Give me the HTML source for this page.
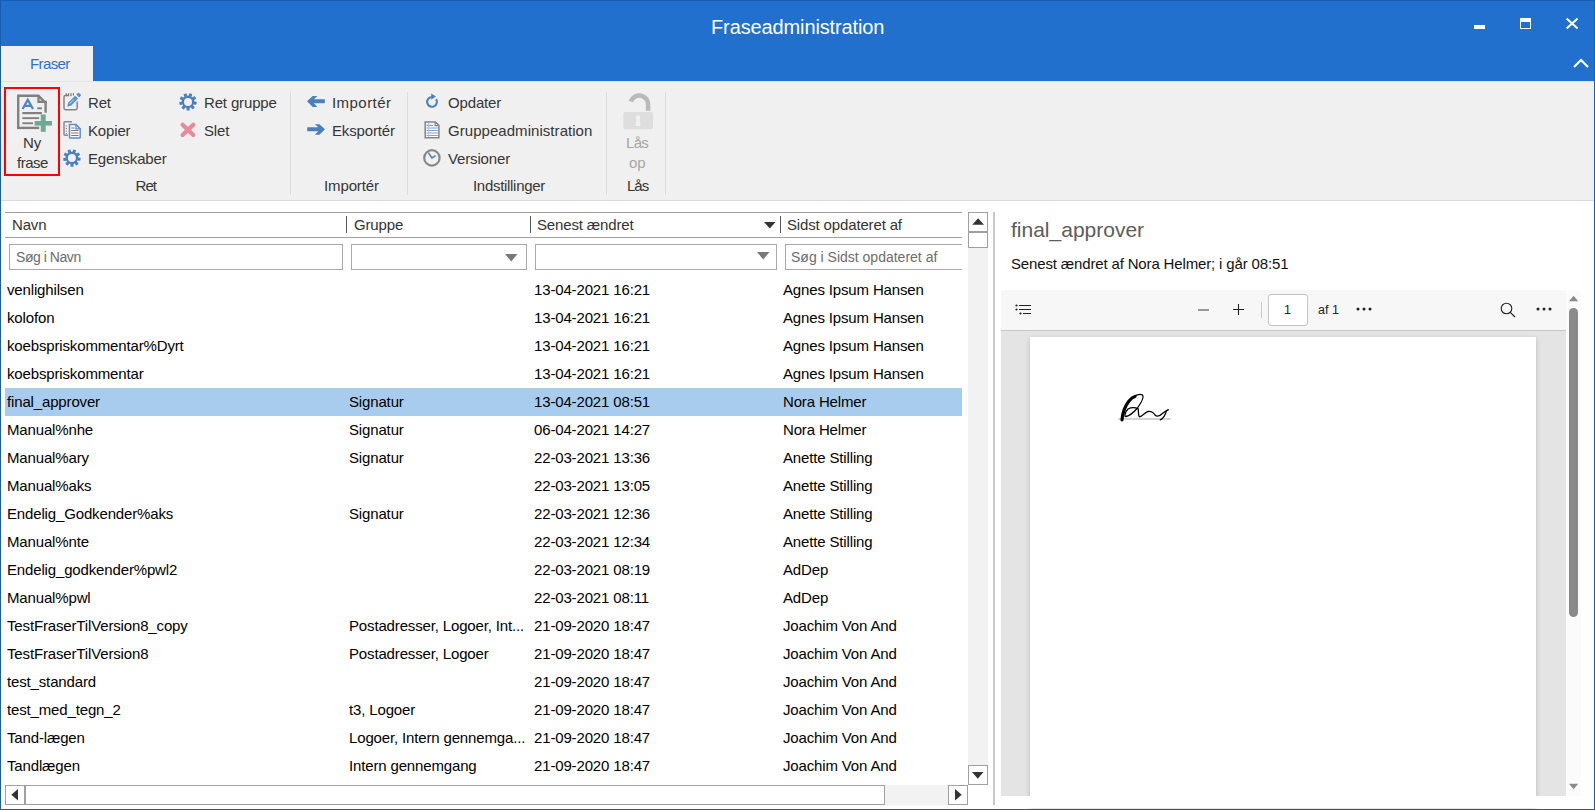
<!DOCTYPE html>
<html><head><meta charset="utf-8">
<style>
*{margin:0;padding:0;box-sizing:border-box}
html,body{width:1595px;height:810px;overflow:hidden;background:#fff;font-family:"Liberation Sans",sans-serif;font-size:15px;color:#000}
.a{position:absolute}
.t{position:absolute;white-space:nowrap;line-height:20px;letter-spacing:-0.15px}
#title{left:0;top:0;width:1595px;height:81px;background:#2170cd}
#frame{left:0;top:0;width:1595px;height:810px;border:1px solid #1a5cb0;pointer-events:none}
#ribbon{left:1px;top:81px;width:1593px;height:120px;background:#f0f0f0;border-bottom:1px solid #d9d9d9;border-top:1px solid #e2e2e2}
.rt{color:#363636}
.sep{position:absolute;width:1px;background:#dcdcdc}
.row{position:absolute;left:5px;width:957px;height:28px}
.row .t{line-height:28px;top:0}
.sel{background:#a8ccee}
</style></head><body>
<div class="a" id="title"></div>
<div class="t" style="left:711px;top:16px;font-size:20px;color:#fff;line-height:22px;letter-spacing:-0.12px">Fraseadministration</div>
<!-- window controls -->
<div class="a" style="left:1474px;top:25px;width:11px;height:4px;background:#fff"></div>
<div class="a" style="left:1520px;top:18px;width:11px;height:11px;border:1px solid #fff;border-top-width:4px"></div>
<svg class="a" style="left:1564px;top:16px" width="16" height="15" viewBox="0 0 16 15"><path d="M2.6 2.4 L13.6 12.6 M13.6 2.4 L2.6 12.6" stroke="#fff" stroke-width="2"/></svg>
<svg class="a" style="left:1572px;top:57px" width="18" height="12" viewBox="0 0 18 12"><path d="M2 10 L9 3 L16 10" stroke="#fff" stroke-width="2.2" fill="none"/></svg>
<!-- tab -->
<div class="a" style="left:1px;top:46px;width:92px;height:35px;background:#f0f0f0"></div>
<div class="t" style="left:30px;top:54px;color:#2d6fcf;letter-spacing:-0.6px">Fraser</div>

<div class="a" id="ribbon"></div>
<!-- Ny frase -->
<div class="a" style="left:4px;top:87px;width:56px;height:89px;border:2px solid #f00"></div>
<svg class="a" style="left:12px;top:90px" width="44" height="44" viewBox="0 0 44 44">
 <path d="M6.2 5.8 H26.5 L33.6 12.9 V22.8" fill="none" stroke="#808080" stroke-width="2.4"/>
 <path d="M6.2 4.6 V38.2" stroke="#808080" stroke-width="2.4"/>
 <path d="M5 37.9 H27.2" stroke="#808080" stroke-width="2.4"/>
 <path d="M26.5 5 V11.8 H34.8" fill="none" stroke="#808080" stroke-width="2.2"/>
 <path d="M10.6 19 L15.8 9.8 L21 19 M12.4 15.8 H19.2" fill="none" stroke="#4a86c8" stroke-width="2.3"/>
 <rect x="25.3" y="17.3" width="4.6" height="2" fill="#808080"/>
 <rect x="10.3" y="22" width="19.6" height="2.2" fill="#808080"/>
 <rect x="10.3" y="27.2" width="16.9" height="1.9" fill="#808080"/>
 <rect x="10.3" y="32.3" width="10.7" height="1.9" fill="#808080"/>
 <rect x="22.6" y="31" width="17.4" height="4.6" fill="#6fa894"/>
 <rect x="28.8" y="24.5" width="4.9" height="17.3" fill="#6fa894"/>
</svg>
<div class="t rt" style="left:23px;top:132.5px;">Ny</div>
<div class="t rt" style="left:17px;top:153px;letter-spacing:-0.5px">frase</div>

<!-- Ret icon -->
<svg class="a" style="left:60px;top:90px" width="24" height="24" viewBox="60 90 24 24">
 <path d="M68 95.4 H65.6 Q64 95.4 64 97 V108 Q64 109.7 65.6 109.7 H75.6 Q77.2 109.7 77.2 108 V101.5" fill="none" stroke="#858585" stroke-width="1.5"/>
 <path d="M66.2 93.2 V96.3 M68.6 93.2 V96.3 M71 93.2 V96.3 M73.4 93.2 V95.5" stroke="#6a6a6a" stroke-width="1.1"/>
 <path d="M67.2 106.8 L68.3 102.6 L75.2 95.7 L78.1 98.6 L71.2 105.5 Z" fill="#5a8fd0"/>
 <path d="M76.3 94.6 L77.9 93 Q78.5 92.4 79.1 93 L80.7 94.6 Q81.3 95.2 80.7 95.8 L79.1 97.4 Z" fill="#5a8fd0"/>
 <path d="M69.6 103.8 L73.8 99.6" stroke="#dfe9f5" stroke-width="0.9"/>
</svg>
<div class="t rt" style="left:88px;top:93px;">Ret</div>
<!-- Kopier icon -->
<svg class="a" style="left:60px;top:118px" width="24" height="24" viewBox="60 118 24 24">
 <path d="M72 121.8 H65 Q64 121.8 64 122.8 V134.3 Q64 135.3 65 135.3 H68" fill="none" stroke="#8a8a8a" stroke-width="1.5"/>
 <path d="M66.3 125.5 v0.9 M66.3 128 v0.9 M66.3 130.5 v0.9 M66.3 133 v0.9" stroke="#777" stroke-width="1.1"/>
 <path d="M69.5 124.6 H76 L80.2 128.8 V137.2 Q80.2 138 79.4 138 H70.3 Q69.5 138 69.5 137.2 Z" fill="#fafafa" stroke="#5a8fd0" stroke-width="1.5"/>
 <path d="M76 124.6 V128.8 H80.2" fill="none" stroke="#5a8fd0" stroke-width="1.3"/>
 <path d="M71.2 128 H74.5 M71.2 130.5 H78.5 M71.2 133 H78.5 M71.2 135.5 H78.5" stroke="#7a7a7a" stroke-width="1.1"/>
</svg>
<div class="t rt" style="left:88px;top:121px;">Kopier</div>
<!-- Egenskaber gear -->
<svg class="a" style="left:60px;top:147px" width="22" height="22" viewBox="60 147 22 22"><g fill="#4a80c0"><circle cx="71.9" cy="158.0" r="6.2"/><rect x="70.45" y="158.0" width="3.1" height="8.7" rx="0.5" transform="rotate(0 71.9 158.0)"/><rect x="70.45" y="158.0" width="3.1" height="8.7" rx="0.5" transform="rotate(40 71.9 158.0)"/><rect x="70.45" y="158.0" width="3.1" height="8.7" rx="0.5" transform="rotate(80 71.9 158.0)"/><rect x="70.45" y="158.0" width="3.1" height="8.7" rx="0.5" transform="rotate(120 71.9 158.0)"/><rect x="70.45" y="158.0" width="3.1" height="8.7" rx="0.5" transform="rotate(160 71.9 158.0)"/><rect x="70.45" y="158.0" width="3.1" height="8.7" rx="0.5" transform="rotate(200 71.9 158.0)"/><rect x="70.45" y="158.0" width="3.1" height="8.7" rx="0.5" transform="rotate(240 71.9 158.0)"/><rect x="70.45" y="158.0" width="3.1" height="8.7" rx="0.5" transform="rotate(280 71.9 158.0)"/><rect x="70.45" y="158.0" width="3.1" height="8.7" rx="0.5" transform="rotate(320 71.9 158.0)"/></g><circle cx="71.9" cy="158.0" r="4.0" fill="#f0f0f0"/></svg>
<div class="t rt" style="left:88px;top:149px;">Egenskaber</div>
<!-- Ret gruppe gear -->
<svg class="a" style="left:177px;top:90px" width="22" height="22" viewBox="177 90 22 22"><g fill="#4a80c0"><circle cx="188.0" cy="101.9" r="6.2"/><rect x="186.55" y="101.9" width="3.1" height="8.7" rx="0.5" transform="rotate(0 188.0 101.9)"/><rect x="186.55" y="101.9" width="3.1" height="8.7" rx="0.5" transform="rotate(40 188.0 101.9)"/><rect x="186.55" y="101.9" width="3.1" height="8.7" rx="0.5" transform="rotate(80 188.0 101.9)"/><rect x="186.55" y="101.9" width="3.1" height="8.7" rx="0.5" transform="rotate(120 188.0 101.9)"/><rect x="186.55" y="101.9" width="3.1" height="8.7" rx="0.5" transform="rotate(160 188.0 101.9)"/><rect x="186.55" y="101.9" width="3.1" height="8.7" rx="0.5" transform="rotate(200 188.0 101.9)"/><rect x="186.55" y="101.9" width="3.1" height="8.7" rx="0.5" transform="rotate(240 188.0 101.9)"/><rect x="186.55" y="101.9" width="3.1" height="8.7" rx="0.5" transform="rotate(280 188.0 101.9)"/><rect x="186.55" y="101.9" width="3.1" height="8.7" rx="0.5" transform="rotate(320 188.0 101.9)"/></g><circle cx="188.0" cy="101.9" r="4.0" fill="#f0f0f0"/></svg>
<div class="t rt" style="left:204px;top:93px;">Ret gruppe</div>
<!-- Slet X -->
<svg class="a" style="left:178px;top:120px" width="20" height="20" viewBox="178 120 20 20">
 <path d="M182.6 124.8 L193.3 135.1 M193.3 124.8 L182.6 135.1" stroke="#e8899a" stroke-width="4.2" stroke-linecap="round"/>
</svg>
<div class="t rt" style="left:204px;top:121px;">Slet</div>
<div class="t rt" style="left:135.5px;top:176px;letter-spacing:-0.9px">Ret</div>
<div class="sep" style="left:290px;top:92px;height:103px"></div>

<!-- Import/Export -->
<svg class="a" style="left:300px;top:90px" width="30" height="50" viewBox="300 90 30 50">
 <polygon points="307,101.3 312.7,96 317.4,96 313.9,99.3 324.8,99.3 324.8,103.2 313.9,103.2 317.4,106.9 312.7,106.9" fill="#4a7fc0"/>
 <polygon points="325,129.2 319.4,124.2 314.8,124.2 318.3,127.2 307.2,127.2 307.2,131.3 318.3,131.3 314.8,134.8 319.4,134.8" fill="#4a7fc0"/>
</svg>
<div class="t rt" style="left:332px;top:93px;letter-spacing:0.45px">Importér</div>
<div class="t rt" style="left:332px;top:121px;">Eksportér</div>
<div class="t rt" style="left:324px;top:176px;letter-spacing:-0.12px">Importér</div>
<div class="sep" style="left:407px;top:92px;height:103px"></div>

<!-- Indstillinger -->
<svg class="a" style="left:420px;top:90px" width="24" height="24" viewBox="420 90 24 24">
 <path d="M431.6 97 A4.9 4.9 0 1 0 436.1 99.2" fill="none" stroke="#4a80c0" stroke-width="2.1"/>
 <path d="M431.2 93.4 L435.9 96.6 L431.2 99.8 Z" fill="#4a80c0"/>
</svg>
<div class="t rt" style="left:448px;top:93px;">Opdater</div>
<svg class="a" style="left:420px;top:118px" width="24" height="24" viewBox="420 118 24 24">
 <path d="M425.2 121.9 H435.4 L438.9 125.4 V137.8 H425.2 Z" fill="#fafafa" stroke="#858585" stroke-width="1.5"/>
 <path d="M435.2 121.9 V125.6 H438.9" fill="none" stroke="#858585" stroke-width="1.3"/>
 <path d="M426.5 125.4 H433 M426.5 128 H437.8 M426.5 130.5 H437.8 M426.5 133 H437.8 M426.5 135.5 H437.8" stroke="#7da6d6" stroke-width="1.1"/>
 <path d="M428.6 123 V137" stroke="#a9c4e6" stroke-width="0.9"/>
</svg>
<div class="t rt" style="left:448px;top:121px;letter-spacing:0.05px">Gruppeadministration</div>
<svg class="a" style="left:420px;top:146px" width="24" height="24" viewBox="420 146 24 24">
 <circle cx="431.9" cy="157.9" r="7.7" fill="none" stroke="#888" stroke-width="2.2"/>
 <path d="M428.4 152.6 L431.9 158 L435.6 155.6" fill="none" stroke="#4a80c0" stroke-width="1.5" stroke-linejoin="round"/>
</svg>
<div class="t rt" style="left:448px;top:149px;">Versioner</div>
<div class="t rt" style="left:473px;top:176px;letter-spacing:-0.3px">Indstillinger</div>
<div class="sep" style="left:606px;top:92px;height:103px"></div>

<!-- Lås -->
<svg class="a" style="left:616px;top:90px" width="44" height="44" viewBox="616 90 44 44">
 <path d="M630.8 101.6 A8.9 8.9 0 0 1 648.1 105.3 V110.8" fill="none" stroke="#bababa" stroke-width="4.6"/>
 <rect x="623.3" y="112" width="29.7" height="17.2" rx="2.2" fill="#dedede"/>
 <circle cx="638" cy="117.5" r="2.3" fill="#f2f2f2"/>
 <path d="M636.6 118.5 H639.4 L640.5 125.9 H635.5 Z" fill="#f2f2f2"/>
</svg>
<div class="t" style="left:626px;top:133px;color:#a6a6a6;letter-spacing:-0.7px">Lås</div>
<div class="t" style="left:629px;top:153px;color:#a6a6a6">op</div>
<div class="t rt" style="left:627px;top:176px;letter-spacing:-1px">Lås</div>
<div class="sep" style="left:665px;top:92px;height:103px"></div>


<!-- table -->
<div class="a" style="left:5px;top:212px;width:957px;height:1px;background:#a0a0a0"></div>
<div class="a" style="left:5px;top:237px;width:957px;height:1px;background:#a0a0a0"></div>
<div class="t" style="left:12px;top:215px;color:#333">Navn</div>
<div class="a" style="left:346px;top:216px;width:1px;height:17px;background:#555"></div>
<div class="t" style="left:354px;top:215px;color:#333">Gruppe</div>
<div class="a" style="left:530px;top:216px;width:1px;height:17px;background:#555"></div>
<div class="t" style="left:537px;top:215px;color:#333">Senest ændret</div>
<svg class="a" style="left:764px;top:222px" width="12" height="7" viewBox="0 0 12 7"><path d="M0 0 H11.5 L5.75 6.5Z" fill="#333"/></svg>
<div class="a" style="left:780px;top:216px;width:1px;height:17px;background:#555"></div>
<div class="t" style="left:787px;top:215px;color:#333">Sidst opdateret af</div>
<div class="a" style="left:9px;top:244px;width:334px;height:26px;border:1px solid #a8a8a8;background:#fff"></div>
<div class="t" style="left:16px;top:247px;color:#6d6d6d;font-size:14px;letter-spacing:-0.45px">Søg i Navn</div>
<div class="a" style="left:351px;top:244px;width:176px;height:26px;border:1px solid #a8a8a8;background:#fff"></div>
<svg class="a" style="left:505px;top:254px" width="13" height="8" viewBox="0 0 13 8"><path d="M0 0 H12.5 L6.25 7.5Z" fill="#787878"/></svg>
<div class="a" style="left:535px;top:244px;width:242px;height:26px;border:1px solid #a8a8a8;background:#fff"></div>
<svg class="a" style="left:757px;top:252px" width="13" height="8" viewBox="0 0 13 8"><path d="M0 0 H12.5 L6.25 7.5Z" fill="#787878"/></svg>
<div class="a" style="left:785px;top:244px;width:190px;height:26px;border:1px solid #a8a8a8;background:#fff"></div>
<div class="t" style="left:791px;top:246.5px;color:#6d6d6d;font-size:14px;letter-spacing:0">Søg i Sidst opdateret af</div>
<div class="a" style="left:962px;top:240px;width:6px;height:40px;background:#fff"></div>
<div class="row" style="top:276px"><div class="t" style="left:2px">venlighilsen</div><div class="t" style="left:344px"></div><div class="t" style="left:529px">13-04-2021 16:21</div><div class="t" style="left:778px">Agnes Ipsum Hansen</div></div>
<div class="row" style="top:304px"><div class="t" style="left:2px">kolofon</div><div class="t" style="left:344px"></div><div class="t" style="left:529px">13-04-2021 16:21</div><div class="t" style="left:778px">Agnes Ipsum Hansen</div></div>
<div class="row" style="top:332px"><div class="t" style="left:2px">koebspriskommentar%Dyrt</div><div class="t" style="left:344px"></div><div class="t" style="left:529px">13-04-2021 16:21</div><div class="t" style="left:778px">Agnes Ipsum Hansen</div></div>
<div class="row" style="top:360px"><div class="t" style="left:2px">koebspriskommentar</div><div class="t" style="left:344px"></div><div class="t" style="left:529px">13-04-2021 16:21</div><div class="t" style="left:778px">Agnes Ipsum Hansen</div></div>
<div class="row sel" style="top:388px"><div class="t" style="left:2px">final_approver</div><div class="t" style="left:344px">Signatur</div><div class="t" style="left:529px">13-04-2021 08:51</div><div class="t" style="left:778px">Nora Helmer</div></div>
<div class="row" style="top:416px"><div class="t" style="left:2px">Manual%nhe</div><div class="t" style="left:344px">Signatur</div><div class="t" style="left:529px">06-04-2021 14:27</div><div class="t" style="left:778px">Nora Helmer</div></div>
<div class="row" style="top:444px"><div class="t" style="left:2px">Manual%ary</div><div class="t" style="left:344px">Signatur</div><div class="t" style="left:529px">22-03-2021 13:36</div><div class="t" style="left:778px">Anette Stilling</div></div>
<div class="row" style="top:472px"><div class="t" style="left:2px">Manual%aks</div><div class="t" style="left:344px"></div><div class="t" style="left:529px">22-03-2021 13:05</div><div class="t" style="left:778px">Anette Stilling</div></div>
<div class="row" style="top:500px"><div class="t" style="left:2px">Endelig_Godkender%aks</div><div class="t" style="left:344px">Signatur</div><div class="t" style="left:529px">22-03-2021 12:36</div><div class="t" style="left:778px">Anette Stilling</div></div>
<div class="row" style="top:528px"><div class="t" style="left:2px">Manual%nte</div><div class="t" style="left:344px"></div><div class="t" style="left:529px">22-03-2021 12:34</div><div class="t" style="left:778px">Anette Stilling</div></div>
<div class="row" style="top:556px"><div class="t" style="left:2px">Endelig_godkender%pwl2</div><div class="t" style="left:344px"></div><div class="t" style="left:529px">22-03-2021 08:19</div><div class="t" style="left:778px">AdDep</div></div>
<div class="row" style="top:584px"><div class="t" style="left:2px">Manual%pwl</div><div class="t" style="left:344px"></div><div class="t" style="left:529px">22-03-2021 08:11</div><div class="t" style="left:778px">AdDep</div></div>
<div class="row" style="top:612px"><div class="t" style="left:2px">TestFraserTilVersion8_copy</div><div class="t" style="left:344px">Postadresser, Logoer, Int...</div><div class="t" style="left:529px">21-09-2020 18:47</div><div class="t" style="left:778px">Joachim Von And</div></div>
<div class="row" style="top:640px"><div class="t" style="left:2px">TestFraserTilVersion8</div><div class="t" style="left:344px">Postadresser, Logoer</div><div class="t" style="left:529px">21-09-2020 18:47</div><div class="t" style="left:778px">Joachim Von And</div></div>
<div class="row" style="top:668px"><div class="t" style="left:2px">test_standard</div><div class="t" style="left:344px"></div><div class="t" style="left:529px">21-09-2020 18:47</div><div class="t" style="left:778px">Joachim Von And</div></div>
<div class="row" style="top:696px"><div class="t" style="left:2px">test_med_tegn_2</div><div class="t" style="left:344px">t3, Logoer</div><div class="t" style="left:529px">21-09-2020 18:47</div><div class="t" style="left:778px">Joachim Von And</div></div>
<div class="row" style="top:724px"><div class="t" style="left:2px">Tand-lægen</div><div class="t" style="left:344px">Logoer, Intern gennemga...</div><div class="t" style="left:529px">21-09-2020 18:47</div><div class="t" style="left:778px">Joachim Von And</div></div>
<div class="row" style="top:752px"><div class="t" style="left:2px">Tandlægen</div><div class="t" style="left:344px">Intern gennemgang</div><div class="t" style="left:529px">21-09-2020 18:47</div><div class="t" style="left:778px">Joachim Von And</div></div>
<div class="a" style="left:968px;top:212px;width:20px;height:573px;background:#f2f2f2"></div>
<div class="a" style="left:968px;top:212px;width:20px;height:20px;border:1px solid #a0a0a0;background:#fff"></div>
<svg class="a" style="left:972px;top:218px" width="13" height="7" viewBox="0 0 13 7"><path d="M0.2 6.8 H12 L6.1 0.3Z" fill="#333"/></svg>
<div class="a" style="left:968px;top:231px;width:20px;height:17px;border:1px solid #a0a0a0;border-top-width:2px;background:#fff"></div>
<div class="a" style="left:968px;top:765px;width:20px;height:20px;border:1px solid #a0a0a0;background:#fff"></div>
<svg class="a" style="left:972px;top:772px" width="12" height="7" viewBox="0 0 12 7"><path d="M0 0 H11.5 L5.75 6.7Z" fill="#333"/></svg>
<div class="a" style="left:5px;top:785px;width:963px;height:20px;background:#f2f2f2"></div>
<div class="a" style="left:5px;top:785px;width:21px;height:20px;border:1px solid #a0a0a0;background:#fff"></div>
<svg class="a" style="left:11px;top:789px" width="7" height="12" viewBox="0 0 7 12"><path d="M7 0 V11.5 L0.3 5.75Z" fill="#333"/></svg>
<div class="a" style="left:24px;top:785px;width:861px;height:20px;border:1px solid #a0a0a0;border-left-width:2px;background:#fff"></div>
<div class="a" style="left:948px;top:785px;width:20px;height:20px;border:1px solid #a0a0a0;background:#fff"></div>
<svg class="a" style="left:955px;top:789px" width="7" height="12" viewBox="0 0 7 12"><path d="M0 0 V11.5 L6.7 5.75Z" fill="#333"/></svg>
<div class="a" style="left:993px;top:212px;width:2px;height:593px;background:#c8c8c8"></div>

<!-- right panel -->
<div class="t" style="left:1011px;top:217px;font-size:21px;line-height:26px;color:#5c5c5c;letter-spacing:0">final_approver</div>
<div class="t" style="left:1011px;top:254px;color:#111">Senest ændret af Nora Helmer; i går 08:51</div>
<div class="a" style="left:1001px;top:290px;width:565px;height:41px;background:#f7f7f7;border-bottom:1px solid #c6c6c6"></div>
<svg class="a" style="left:1012px;top:300px" width="24" height="18" viewBox="0 0 24 18">
 <circle cx="4.5" cy="5.5" r="1.1" fill="#222"/><circle cx="4.5" cy="9.5" r="1.1" fill="#222"/><circle cx="8.5" cy="13.5" r="1.1" fill="#222"/>
 <path d="M7 5.5 H19 M7 9.5 H19 M11 13.5 H19" stroke="#222" stroke-width="1"/>
</svg>
<div class="a" style="left:1198px;top:309px;width:11px;height:2px;background:#999"></div>
<svg class="a" style="left:1231px;top:302px" width="15" height="15" viewBox="0 0 15 15"><path d="M7.5 2 V13 M2 7.5 H13" stroke="#222" stroke-width="1.1"/></svg>
<div class="a" style="left:1261px;top:302px;width:1px;height:16px;background:#c8c8c8"></div>
<div class="a" style="left:1268px;top:294px;width:40px;height:32px;border:1px solid #c4c4c4;border-radius:3px;background:#fff"></div>
<div class="t" style="left:1284px;top:300px;font-size:12.5px;color:#222">1</div>
<div class="t" style="left:1318px;top:300px;font-size:12.5px;color:#222;letter-spacing:0">af 1</div>
<svg class="a" style="left:1355px;top:305px" width="18" height="8" viewBox="0 0 18 8"><circle cx="3" cy="4" r="1.5" fill="#222"/><circle cx="9" cy="4" r="1.5" fill="#222"/><circle cx="15" cy="4" r="1.5" fill="#222"/></svg>
<svg class="a" style="left:1498px;top:300px" width="20" height="20" viewBox="0 0 20 20"><circle cx="8.5" cy="8.5" r="5.3" fill="none" stroke="#222" stroke-width="1.1"/><path d="M12.3 12.3 L17 17" stroke="#222" stroke-width="1.2"/></svg>
<svg class="a" style="left:1535px;top:305px" width="18" height="8" viewBox="0 0 18 8"><circle cx="3" cy="4" r="1.5" fill="#222"/><circle cx="9" cy="4" r="1.5" fill="#222"/><circle cx="15" cy="4" r="1.5" fill="#222"/></svg>
<!-- page area -->
<div class="a" style="left:1001px;top:331px;width:565px;height:465px;background:#e4e4e4"></div>
<div class="a" style="left:1030px;top:337px;width:506px;height:470px;background:#fff;box-shadow:0 2px 5px rgba(0,0,0,0.2)"></div>
<div class="a" style="left:1001px;top:796px;width:565px;height:12px;background:#fff"></div>
<div class="a" style="left:1566px;top:290px;width:15px;height:506px;background:#fbfbfb"></div>
<svg class="a" style="left:1569px;top:295px" width="10" height="7" viewBox="0 0 10 7"><path d="M0 6.2 H9.2 L4.6 0.8Z" fill="#8a8a8a"/></svg>
<div class="a" style="left:1569px;top:308px;width:9px;height:309px;border-radius:4.5px;background:#8a8a8a"></div>
<svg class="a" style="left:1569px;top:783px" width="10" height="7" viewBox="0 0 10 7"><path d="M0 0.8 H9.2 L4.6 6.2Z" fill="#8a8a8a"/></svg>
<!-- signature -->
<svg class="a" style="left:1110px;top:386px" width="70" height="40" viewBox="1110 386 70 40">
 <path d="M1118 419 H1170.6" stroke="#c6c6c6" stroke-width="1.5"/>
 <path d="M1122 419.8 C1122.5 414 1125 406 1129 401 C1131 398.5 1133 397 1135 396.5" fill="none" stroke="#000" stroke-width="3.2" stroke-linecap="round"/>
 <path d="M1121.8 419.9 C1123 413 1127 402 1133 397 C1136 395 1140 393.5 1142.5 395 C1144.5 397 1141 403 1137.5 408 C1134 412 1129 416 1126 416.5 C1124 417 1125 412 1128 409 C1131 407.5 1135 407.5 1138 408.5 C1139 411 1137.8 416 1139.5 416.8 C1142 417 1145 412 1148 411.5 C1151 411 1153 412 1155 415 C1157 417 1160 416 1163 413 L1168.3 409.6" fill="none" stroke="#000" stroke-width="1.3" stroke-linecap="round"/>
 <path d="M1166.5 410.5 C1165.5 414.5 1164.5 418 1160.3 419.9" fill="none" stroke="#000" stroke-width="1.2" stroke-linecap="round"/>
</svg>
<div class="a" id="frame"></div>
</body></html>
